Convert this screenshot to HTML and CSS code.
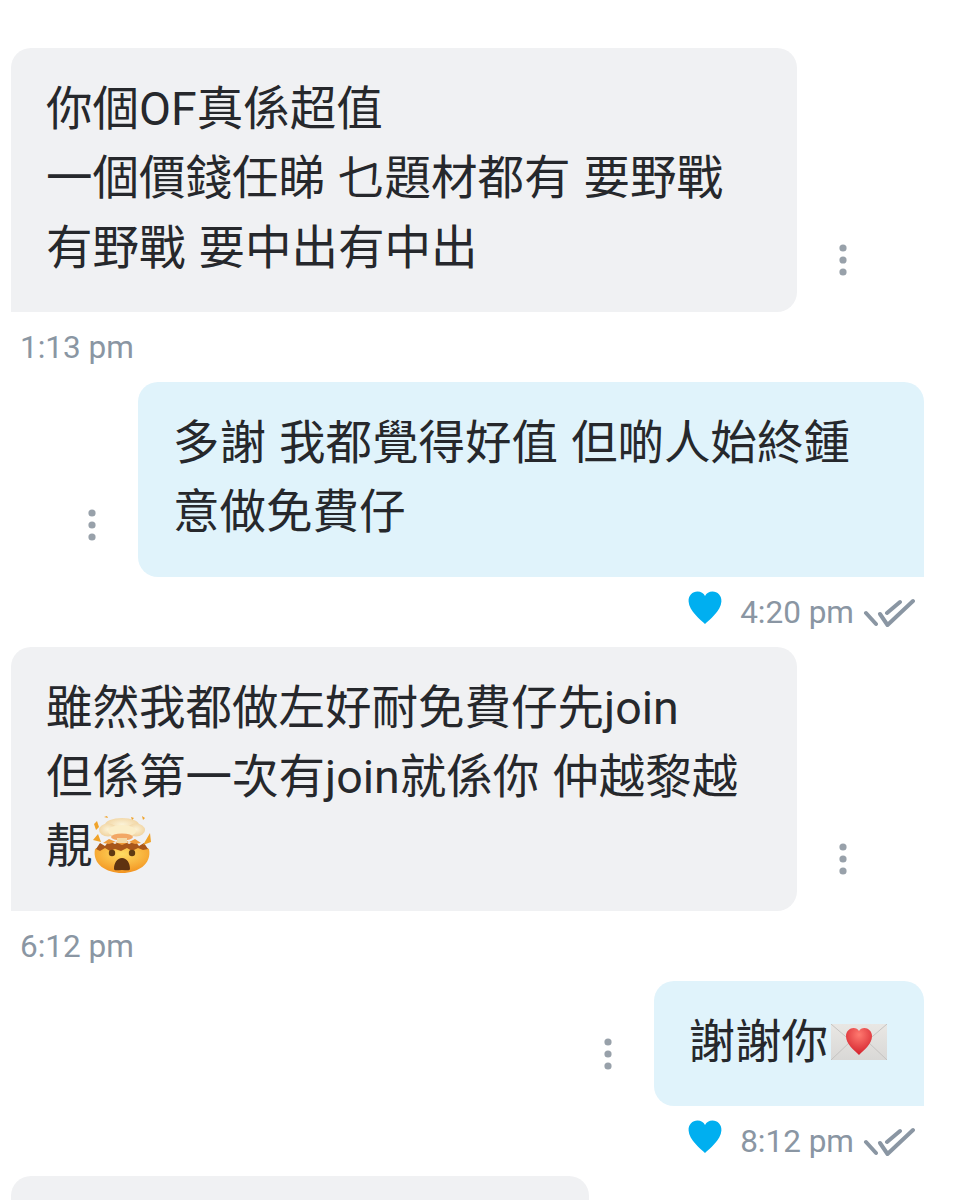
FILE: index.html
```html
<!DOCTYPE html>
<html lang="zh-Hant">
<head>
<meta charset="utf-8">
<title>Chat</title>
<link rel="stylesheet" href="styles.css">
</head>
<body>
<svg class="defs" width="0" height="0" aria-hidden="true">
  <defs>
    <symbol id="dots" viewBox="0 0 8 32">
      <circle cx="4" cy="4" r="3.6"/><circle cx="4" cy="16" r="3.6"/><circle cx="4" cy="28" r="3.6"/>
    </symbol>
    <symbol id="heart" viewBox="0 0 34 34">
      <path d="M17 33C13 29 1 20 .6 10.500.3 4.500 4.500.6 9.500.6c3.500 0 6 1.700 7.500 4.400C18.500 2.300 21 .6 24.500.6c5 0 9.200 3.900 8.900 9.900C33 20 21 29 17 33z"/>
    </symbol>
    <symbol id="check" viewBox="0 0 52 32">
      <path d="M3 16l10 11M17 17l7.500 11L50 4M24 16L37 5" fill="none" stroke-width="4" stroke-linecap="round" stroke-linejoin="round"/>
    </symbol>
  </defs>
</svg>
<main class="chat">
  <div class="row">
    <p class="bubble in">你個OF真係超值<br>一個價錢任睇 乜題材都有 要野戰<br>有野戰 要中出有中出</p>
    <svg class="dots dots-in"><use href="#dots"/></svg>
  </div>
  <div class="meta"><span class="time">1:13 pm</span></div>

  <div class="row row-out">
    <svg class="dots dots-out"><use href="#dots"/></svg>
    <p class="bubble out out-wide">多謝 我都覺得好值 但啲人始終鍾<br>意做免費仔</p>
  </div>
  <div class="meta meta-out">
    <svg class="heart"><use href="#heart"/></svg>
    <span class="time">4:20 pm</span>
    <svg class="check"><use href="#check"/></svg>
  </div>

  <div class="row">
    <p class="bubble in">雖然我都做左好耐免費仔先join<br>但係第一次有join就係你 仲越黎越<br>靚<svg class="emoji emoji-blown" viewBox="0 0 60 60" aria-label="🤯">
      <defs>
        <radialGradient id="face" cx="50%" cy="30%" r="75%"><stop offset="0" stop-color="#ffdc62"/><stop offset="1" stop-color="#f28f1c"/></radialGradient>
        <radialGradient id="cloud" cx="50%" cy="45%" r="60%"><stop offset="0" stop-color="#fbf3d8"/><stop offset="1" stop-color="#f0d09a"/></radialGradient>
      </defs>
      <path d="M3 33C8 29 52 29 57 33 60 48 46 57 30 57S0 48 3 33z" fill="url(#face)"/>
      <path d="M4 33l4-6 5 3 4-5 6 3 7-4 7 4 6-3 4 5 5-3 4 6-5 1-5-2-6 3-5-3-6 3-6-2-5 2-5-3-5 3z" fill="#a8561a"/>
      <path d="M11 27l6-4 7 3 6-3 7 3 6-3 6 4-6 1-6-2-7 3-7-3-6 2z" fill="#ee9a3a"/>
      <ellipse cx="30" cy="9" rx="17" ry="7" fill="url(#cloud)"/>
      <ellipse cx="16" cy="14" rx="9" ry="6.500" fill="url(#cloud)"/>
      <ellipse cx="44" cy="14" rx="9" ry="6.500" fill="url(#cloud)"/>
      <ellipse cx="30" cy="15" rx="14" ry="6" fill="#fbeec8"/>
      <ellipse cx="30" cy="21" rx="11" ry="3.500" fill="#f2a765"/>
      <rect x="25" y="22" width="10" height="5" fill="#f3d9a6"/>
      <path d="M1 24l5-6 3 8zM58 17l1 9-8 3zM2 8l3-3 2 6-3 3zM39 1l3 1-2 2zM50 0l3 2-2 2zM12 1l3-1 1 2z" fill="#f0a32a"/>
      <circle cx="20" cy="37" r="3.200" fill="#5f3a12"/>
      <circle cx="40" cy="37" r="3.200" fill="#5f3a12"/>
      <path d="M22 53c0-6 3-11 8-11s8 5 8 11c0 2-4 1-8 1s-8 1-8-1z" fill="#5f3310"/>
    </svg></p>
    <svg class="dots dots-in"><use href="#dots"/></svg>
  </div>
  <div class="meta"><span class="time">6:12 pm</span></div>

  <div class="row row-out">
    <svg class="dots dots-out"><use href="#dots"/></svg>
    <p class="bubble out">謝謝你<svg class="emoji emoji-mail" viewBox="0 0 56 36" aria-label="💌">
      <defs>
        <linearGradient id="env" x1="0" y1="0" x2="0" y2="1"><stop offset="0" stop-color="#e9e7e4"/><stop offset="1" stop-color="#d9d8d6"/></linearGradient>
        <radialGradient id="love" cx="50%" cy="25%" r="75%"><stop offset="0" stop-color="#ff7a70"/><stop offset="1" stop-color="#d3212c"/></radialGradient>
      </defs>
      <rect width="56" height="36" fill="url(#env)"/>
      <path d="M0 0l28 24L56 0M0 36l20-19M56 36L36 17" fill="none" stroke="#c4c3c1" stroke-width="1"/>
      <path d="M28 31C23 26 15 20 15 12c0-5 4-8 7.500-8 2.500 0 4.500 1 5.500 3 1-2 3-3 5.500-3C37 4 41 7 41 12c0 8-8 14-13 19z" fill="url(#love)"/>
    </svg></p>
  </div>
  <div class="meta meta-out">
    <svg class="heart"><use href="#heart"/></svg>
    <span class="time">8:12 pm</span>
    <svg class="check"><use href="#check"/></svg>
  </div>

  <div class="row">
    <div class="bubble in bubble-last"></div>
  </div>
</main>
</body>
</html>
```

FILE: styles.css
```css
* { box-sizing: border-box; }
html, body { margin: 0; height: 1200px; overflow: hidden; background: #fff; }
.defs { position: absolute; }
.chat {
  display: flex;
  flex-direction: column;
  height: 1200px;
  overflow: hidden;
  padding: 48px 43px 0 11px;
  font-family: Roboto, "Noto Sans CJK TC", "Noto Sans CJK SC", sans-serif;
}
.row { display: flex; flex: none; align-items: flex-end; }
.row-out { justify-content: flex-end; }
.bubble {
  flex: none;
  margin: 0;
  padding: 27px 37px 29px 35px;
  font-size: 46.500px;
  line-height: 69.333px;
  word-spacing: 1.500px;
  color: #26282c;
}
.in { width: 786px; background: #f0f1f3; border-radius: 20px 20px 20px 0; }
.out { background: #e0f3fb; border-radius: 20px 20px 0 20px; }
.out-wide { width: 786px; }
.bubble-last { width: 578px; height: 24px; }
.dots { flex: none; width: 8px; height: 32px; fill: #98a1aa; }
.dots-in { margin: 0 0 36px 42px; }
.dots-out { margin: 0 42px 36px 0; }
.meta { display: flex; flex: none; align-items: center; height: 70px; padding: 2px 0 0 9px; }
.meta-out { justify-content: flex-end; padding: 2px 9px 0 0; }
.time { font-family: Roboto, sans-serif; font-size: 31.500px; color: #8a96a3; line-height: 1; }
.heart { width: 34px; height: 34px; fill: #00aff0; margin: -10px 18px 0 0; }
.check { width: 52px; height: 32px; stroke: #8a96a3; margin: 0 0 0 9px; }
.emoji { display: inline-block; }
.emoji-blown { width: 60px; height: 60px; vertical-align: 0; margin: -14px 0 -14px -1px; }
.emoji-mail { width: 56px; height: 36px; vertical-align: 4px; margin: -6px 0 -6px 3px; }
```
